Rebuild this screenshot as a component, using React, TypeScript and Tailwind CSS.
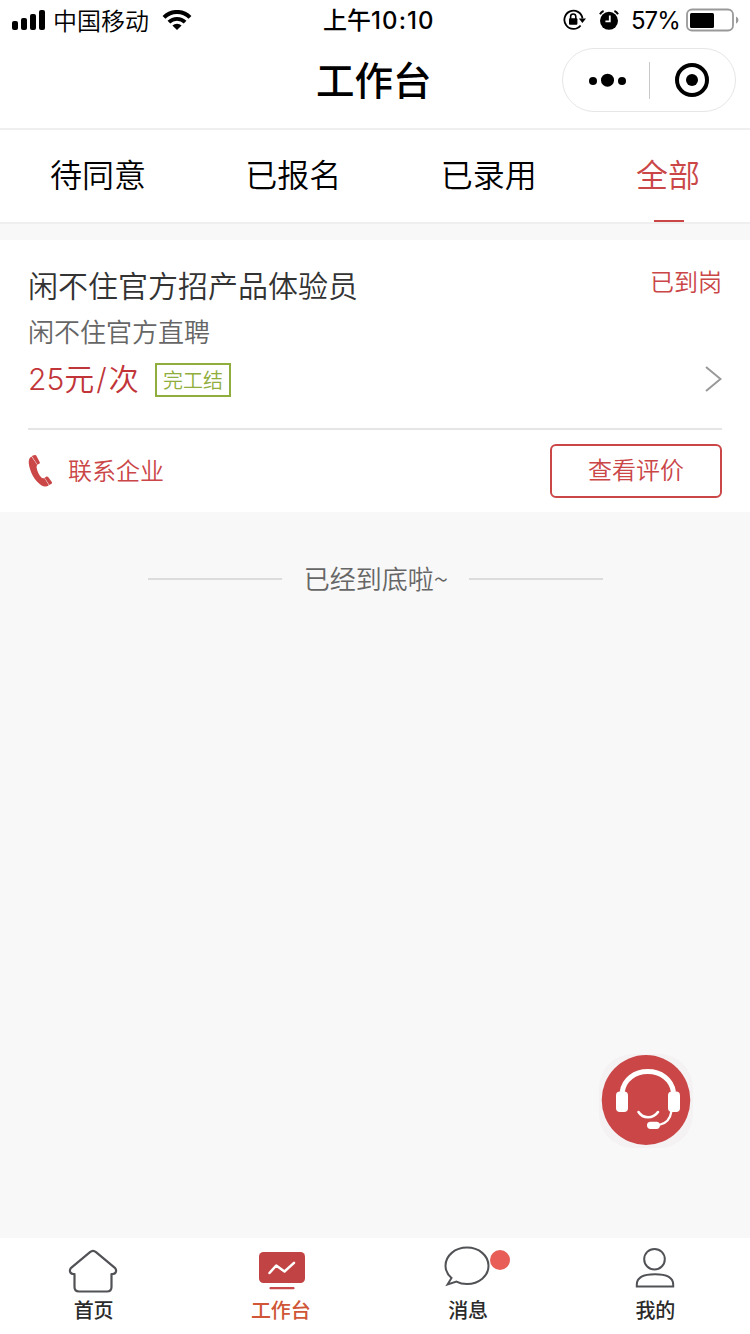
import { useState } from 'react';
import type { ReactNode } from 'react';
import clsx from 'clsx';

const TABS = ['待同意', '已报名', '已录用', '全部'];

export default function App() {
  const [tab, setTab] = useState('全部');

  return (
    <div className="flex h-[1334px] w-[750px] flex-col overflow-hidden bg-[#f8f8f8] font-['Inter','Noto_Sans_CJK_SC',sans-serif] text-black">
      <StatusBar />
      <TitleBar />

      <nav className="flex h-[94px] shrink-0 justify-between border-b-2 border-[#efefef] bg-white px-[50px]">
        {TABS.map((t) => (
          <button
            key={t}
            type="button"
            onClick={() => setTab(t)}
            className={clsx('flex flex-col items-center text-[32px] font-[350]', t === tab && 'text-[#ca4647]')}
          >
            <span className="h-[90px] leading-[92px]">{t}</span>
            {t === tab && <span className="ml-0.5 h-0.5 w-[30px] bg-[#ca4647]" />}
          </button>
        ))}
      </nav>

      <main className="flex-1 pt-4">
        <JobCard />
        <div className="mt-[50px] flex items-center justify-center pt-px">
          <span className="h-0.5 w-[134px] bg-[#dcdcdc]" />
          <span className="h-8 w-[187px] pl-[2px] text-center font-['Noto_Sans_CJK_SC',sans-serif] text-[26px] font-[350] leading-[30px] text-[#666]">已经到底啦~</span>
          <span className="h-0.5 w-[134px] bg-[#dcdcdc]" />
        </div>
      </main>

      <SupportButton />

      <footer className="grid h-24 shrink-0 grid-cols-4 bg-white pr-px">
        <NavItem label="首页"><HomeIcon /></NavItem>
        <NavItem label="工作台" active><BoardIcon /></NavItem>
        <NavItem label="消息" badge><ChatIcon /></NavItem>
        <NavItem label="我的"><UserIcon /></NavItem>
      </footer>
    </div>
  );
}

function StatusBar() {
  return (
    <div className="flex h-10 shrink-0 items-center bg-white pl-3 pr-[11px] text-[24px] leading-10">
      <div className="flex w-[311px] items-center">
        <svg width="34" height="20" viewBox="0 0 34 20">
          <rect x="0" y="11" width="6" height="9" rx="2" />
          <rect x="9" y="8" width="6" height="12" rx="2" />
          <rect x="18" y="4" width="6" height="16" rx="2" />
          <rect x="27" y="0" width="6" height="20" rx="2" />
        </svg>
        <span className="ml-[7px] pt-[3px] font-[350]">中国移动</span>
        <svg className="ml-[13px]" width="30" height="20" viewBox="0 0 30 20" fill="none" stroke="#000">
          <path d="M2 7.4a18.2 18.2 0 0 1 26 0" strokeWidth="4" />
          <path d="M6.9 12.2a11.4 11.4 0 0 1 16.2 0" strokeWidth="3.8" />
          <path d="M15 20l-4.6-4.4a6.4 6.4 0 0 1 9.2 0z" fill="#000" stroke="none" />
        </svg>
      </div>
      <div className="whitespace-nowrap pt-0.5 font-medium">
        上午<span className="tracking-[1.1px]">10:10</span>
      </div>
      <div className="flex flex-1 items-center justify-end">
        <svg width="24" height="22" viewBox="0 0 24 22" fill="none" stroke="#000" strokeWidth="1.8">
          <path d="M19.5 9.5A9.1 9.1 0 1 0 17.6 16.5" />
          <path d="M15.8 9.4h7.2L19.4 14z" fill="#000" stroke="none" />
          <rect x="6" y="9.3" width="8.4" height="6.4" rx="1" fill="#000" stroke="none" />
          <path d="M7.6 10V7.6a2.6 2.6 0 0 1 5.2 0V10" strokeWidth="1.6" />
        </svg>
        <svg className="ml-[12px]" width="20" height="20" viewBox="0 0 20 20" fill="none">
          <circle cx="10" cy="10.8" r="9" fill="#000" />
          <path d="M1 4.2A7 7 0 0 1 4.6 1M19 4.2A7 7 0 0 0 15.4 1" stroke="#000" strokeWidth="2" />
          <path d="M10.8 5.4v6H6.4" stroke="#fff" strokeWidth="1.8" />
        </svg>
        <span className="ml-[12px] w-[49px] whitespace-nowrap pt-0.5 tracking-[-1px]">57%</span>
        <svg className="ml-[6px]" width="53" height="24" viewBox="0 0 53 24">
          <rect x="1" y="1.5" width="46" height="21" rx="5" fill="none" stroke="#999" strokeWidth="1.8" />
          <rect x="4" y="5" width="24" height="15" rx="1.5" />
          <path d="M50 8.4a4 4 0 0 1 0 7.4z" fill="#999" />
        </svg>
      </div>
    </div>
  );
}

function TitleBar() {
  return (
    <header className="flex h-[90px] shrink-0 items-start border-b-2 border-[#efefef] bg-white pr-[14px] pt-2">
      <div className="w-[316px]" />
      <h1 className="flex-1 pt-[5px] text-[38.5px] font-medium leading-[56px]">工作台</h1>
      <div className="flex h-16 w-[174px] items-center rounded-full border border-[#e6e6e6]">
        <svg className="ml-[25px]" width="40" height="20" viewBox="0 0 40 20">
          <circle cx="5" cy="11" r="4" />
          <circle cx="19.5" cy="10.2" r="6.5" />
          <circle cx="34" cy="11" r="4" />
        </svg>
        <span className="ml-[21px] h-[37px] w-px bg-[#c9c9c9]" />
        <svg className="ml-[25px]" width="34" height="34" viewBox="0 0 34 34">
          <circle cx="17" cy="17" r="15" fill="none" stroke="#000" strokeWidth="4" />
          <circle cx="17" cy="17" r="6" />
        </svg>
      </div>
    </header>
  );
}

function JobCard() {
  return (
    <section className="h-[272px] bg-white px-7 font-[350]">
      <div className="flex h-[188px] justify-between pt-6">
        <div>
          <h2 className="text-[30px] leading-[44px] text-[#333]">闲不住官方招产品体验员</h2>
          <p className="mt-[6px] text-[26px] leading-[38px] text-[#666]">闲不住官方直聘</p>
          <div className="mt-[3px] flex items-center">
            <span className="h-[50px] w-[127px] text-[30px] leading-[49px] text-[#c13539]">
              25元<span className="mx-[2px]">/</span>次
            </span>
            <span className="h-[34px] border-2 border-[#8fae3d] px-[6px] text-[20px] leading-[32px] text-[#8fae3d]">完工结</span>
          </div>
        </div>
        <div className="flex flex-col items-end">
          <span className="h-9 text-[24px] leading-[38px] text-[#ca4647]">已到岗</span>
          <svg className="mt-[65px]" width="17" height="28" viewBox="0 0 17 28" fill="none" stroke="#999" strokeWidth="2">
            <path d="M1 2l14.5 12L1 26" />
          </svg>
        </div>
      </div>
      <div className="flex h-[84px] items-center justify-between border-t-2 border-[#e5e5e5] text-[24px] text-[#ca4647]">
        <button type="button" className="flex items-center">
          <PhoneIcon />
          <span className="ml-4 h-9 leading-[38px]">联系企业</span>
        </button>
        <button type="button" className="h-[54px] w-[172px] rounded-md border-2 border-[#ca4647] leading-[48px]">
          查看评价
        </button>
      </div>
    </section>
  );
}

function PhoneIcon() {
  return (
    <svg width="24" height="32" viewBox="0 0 24 32" fill="#ca4647">
      <path d="M3.4 1.4C1.3 2.8.4 5.2.8 8.6C1.9 17 6.5 26 13.6 30.4C16 31.9 18.6 31.8 20.9 30.3L16.3 22.9C15 23.6 14.2 23.4 13.4 22.6C11 20 9.2 16.4 8.7 13C8.5 11.6 8.6 10.7 9.3 10z" />
      <path d="M3.8 1.1L6.6.1C7.5-.1 8 .1 8.5.9L11.7 6.9C12.1 7.8 11.9 8.3 11.2 8.8L9.5 9.8z" />
      <path d="M16.6 22.7L18.1 21.7C18.9 21.2 19.6 21.4 20.1 22L23.7 26.8C24.2 27.6 24.1 28.2 23.5 28.7L21.3 30.1z" />
    </svg>
  );
}

// Floats over the page content, above the bottom navigation.
function SupportButton() {
  return (
    <button type="button" aria-label="客服" className="absolute left-[599px] top-[1052px]">
      <svg width="94" height="96" viewBox="0 0 94 96" fill="none">
        <rect x="0" y="2" width="94" height="94" rx="34" fill="#f5f2f4" />
        <ellipse cx="47" cy="48" rx="44.3" ry="45" fill="#ca4647" />
        <path d="M23.2 40C25 27 36 19.6 48.8 19.6S72.6 27 74.5 40" stroke="#fff" strokeWidth="5" />
        <rect x="17" y="39.5" width="12" height="20.5" rx="4" fill="#fff" />
        <rect x="69" y="39.5" width="12" height="20.5" rx="4" fill="#fff" />
        <path d="M39.5 60C44 67 54 67 59 60" stroke="#fff" strokeWidth="2.6" strokeLinecap="round" />
        <path d="M72.5 59C71.5 66 68 71.5 60 73" stroke="#fff" strokeWidth="2.2" />
        <rect x="48" y="69.7" width="13" height="7.2" rx="3.6" fill="#fff" />
      </svg>
    </button>
  );
}

function NavItem({
  label,
  active = false,
  badge = false,
  children,
}: {
  label: string;
  active?: boolean;
  badge?: boolean;
  children: ReactNode;
}) {
  return (
    <button
      type="button"
      className={clsx(
        'flex flex-col items-center pt-2 text-[20px] font-medium leading-[34px]',
        active ? 'text-[#cf5636]' : 'text-[#2b2b2b]',
      )}
    >
      <span className="relative h-[48px]">
        {children}
        {badge && <span className="absolute left-[46px] top-1 size-5 rounded-full bg-[#e85d58]" />}
      </span>
      <span>{label}</span>
    </button>
  );
}

function HomeIcon() {
  return (
    <svg className="mr-px" width="50" height="48" viewBox="0 0 50 48" fill="none" stroke="#515256" strokeWidth="2.2" strokeLinejoin="round">
      <path d="M22 6.2Q25 3.6 28 6.2L47.2 22.2Q48.6 23.8 47.8 26Q47 28 44.500 28H43.5V41Q43.5 45.5 39 45.5H11Q6.5 45.5 6.5 41V28H5.5Q3 28 2.2 26Q1.4 23.8 2.8 22.2z" />
    </svg>
  );
}

function BoardIcon() {
  return (
    <svg className="ml-[3px]" width="46" height="48" viewBox="0 0 46 48" fill="none">
      <rect x="0" y="6" width="46" height="31" rx="4.5" fill="#c24344" />
      <path d="M10.5 27L17.2 19.5L25.5 25.5L35 16.8" stroke="#fff" strokeWidth="2.5" strokeLinecap="round" strokeLinejoin="round" />
      <path d="M11.5 42.2H34.5" stroke="#c94a4a" strokeWidth="2.2" strokeLinecap="round" />
    </svg>
  );
}

function ChatIcon() {
  return (
    <svg className="mr-0.5" width="46" height="48" viewBox="0 0 46 48" fill="none" stroke="#515256" strokeWidth="2">
      <path d="M3.5 38.5L7.5 32C3.5 28.5 1.5 24.5 1.5 19.8C1.5 9.6 11 1.6 23 1.6S44.5 9.6 44.5 19.8S35 38 23 38C19 38 15.5 37.2 12.5 35.6z" />
    </svg>
  );
}

function UserIcon() {
  return (
    <svg className="mr-px" width="40" height="48" viewBox="0 0 40 48" fill="none" stroke="#515256" strokeWidth="2">
      <circle cx="19.5" cy="13.2" r="10.3" />
      <path d="M1.8 40.5V38.5C1.8 31.5 8 28.2 20 28.2S38.2 31.5 38.2 38.5V40.5z" />
    </svg>
  );
}
